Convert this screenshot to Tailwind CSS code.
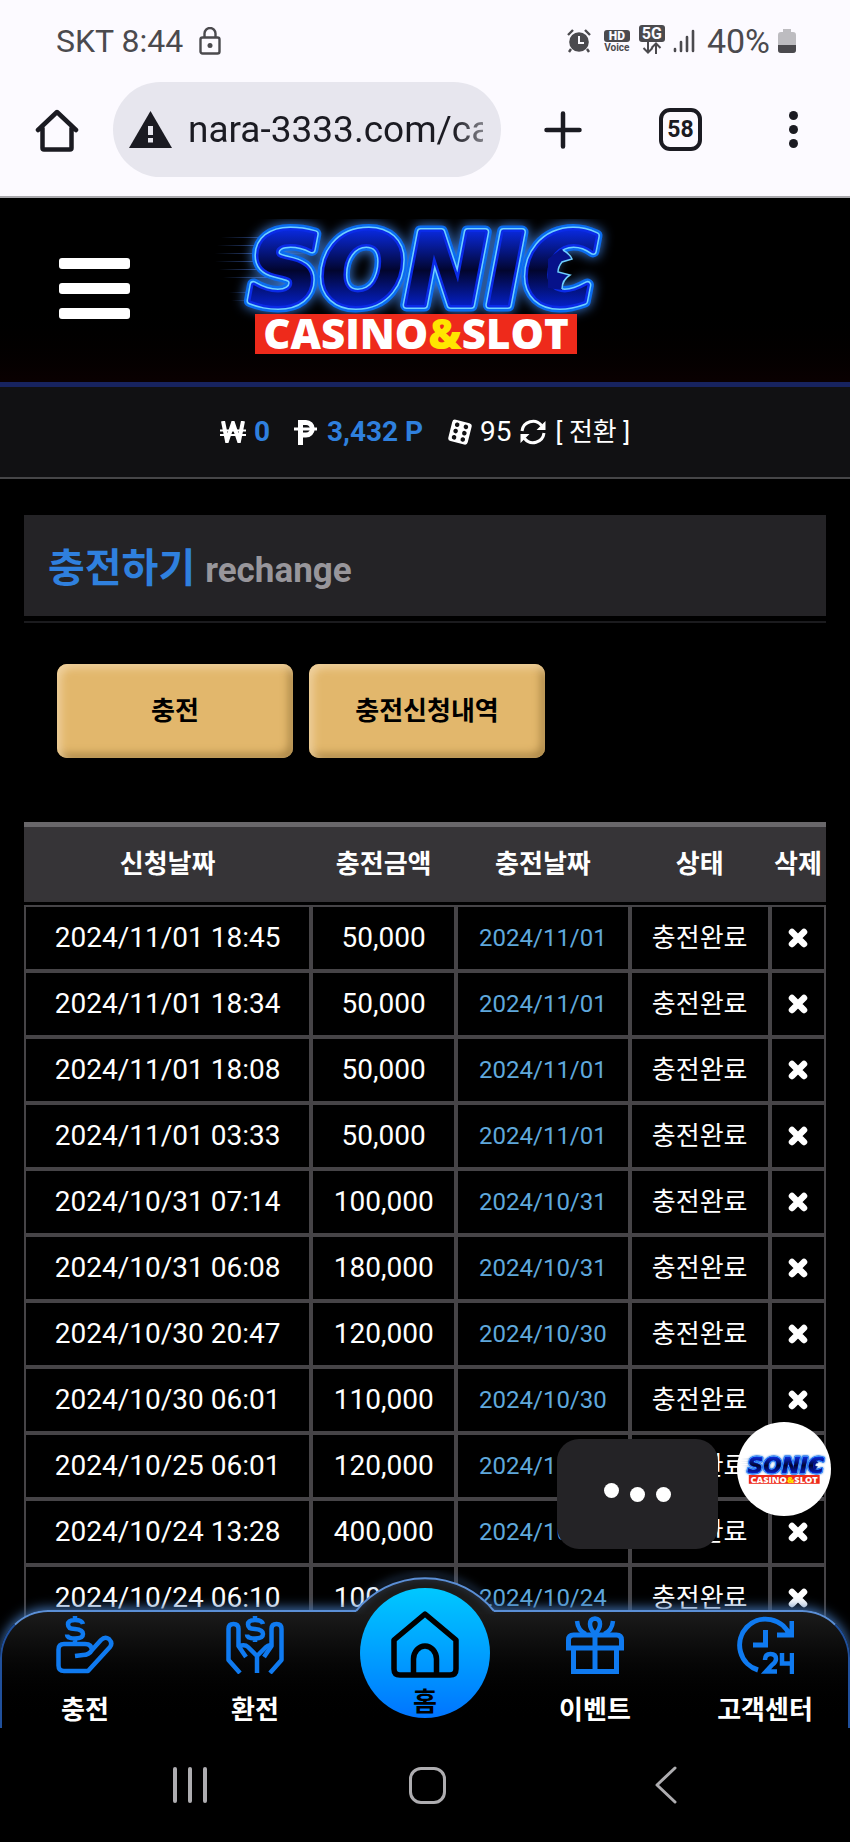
<!DOCTYPE html>
<html lang="ko">

<head>
    <meta charset="UTF-8">
    <meta name="viewport" content="width=device-width, initial-scale=1.0">
    <title>SONIC CASINO&amp;SLOT - 충전하기</title>
    <script src="https://cdn.jsdelivr.net/npm/@tailwindcss/browser@4"></script>
</head>

<body class="h-screen flex flex-col overflow-hidden bg-black text-white font-['Roboto','Noto_Sans_CJK_KR',sans-serif]">

    <!-- Shared drawings -->
    <svg class="absolute w-0 h-0" aria-hidden="true">
        <defs>
            <linearGradient id="letterFill" x1="0" y1="0" x2="0" y2="1">
                <stop offset=".1" stop-color="#0a2ef5" />
                <stop offset=".5" stop-color="#02052e" />
                <stop offset=".9" stop-color="#0527f0" />
            </linearGradient>
            <linearGradient id="speedLine" x1="0" y1="0" x2="1" y2="0">
                <stop offset="0" stop-color="#3b5fae" stop-opacity="0" />
                <stop offset=".6" stop-color="#3b5fae" />
                <stop offset="1" stop-color="#3b5fae" stop-opacity=".2" />
            </linearGradient>
            <symbol id="logo" viewBox="0 0 400 140">
                <g fill="url(#speedLine)">
                    <rect x="6" y="18" width="90" height="1" />
                    <rect x="2" y="26" width="90" height="1" />
                    <rect x="0" y="34" width="90" height="1" />
                    <rect x="0" y="42" width="90" height="1" />
                    <rect x="4" y="50" width="80" height="1" />
                    <rect x="8" y="58" width="80" height="1" />
                    <rect x="14" y="73" width="60" height="1" />
                    <rect x="16" y="81" width="60" height="1" />
                </g>
                <g font-family="DejaVu Sans, sans-serif" font-weight="700" font-style="italic" font-size="99" stroke-linejoin="round" class="drop-shadow-[0_0_6px_#3d7fe0]">
                    <text x="34" y="86" fill="#0a6cf0" stroke="#0a6cf0" stroke-width="13">SONIC</text>
                    <text x="34" y="86" fill="#6fd0ff" stroke="#6fd0ff" stroke-width="8">SONIC</text>
                    <text x="34" y="86" fill="#0a2be8" stroke="#0a2be8" stroke-width="5">SONIC</text>
                    <text x="34" y="86" fill="url(#letterFill)">SONIC</text>
                </g>
                <!-- Spikes inside the C -->
                <path d="M346 30q8 4 11 10l-10 3q-4 5-4 10l12 3q-8 5-8 15l-14-2V40z" fill="#06128a" />
                <path d="M348 31q7 4 9 9l-10 3q-4 5-4 10l12 3q-8 5-8 14" fill="none" stroke="#6fd0ff" stroke-width="1.500" />
                <rect x="40" y="95" width="322" height="40" fill="#ee2a1b" />
                <text x="201" y="130" text-anchor="middle" fill="#fff" font-family="Open Sans, sans-serif" font-weight="800" font-size="42">CASINO<tspan fill="#ffe600">&amp;</tspan>SLOT</text>
            </symbol>
        </defs>
    </svg>

    <!-- Phone status bar -->
    <div class="shrink-0 flex items-center justify-between h-[82px] pl-14 pr-[54px] bg-[#fcfaff] text-[#4b4a4e] text-[32px]">
        <div class="flex items-center gap-4">
            <span>SKT 8:44</span>
            <svg class="w-[22px] h-[28px]" viewBox="0 0 22 28" fill="none" stroke="currentColor" stroke-width="2.4">
                <rect x="1.5" y="10.500" width="19" height="16" rx="2" />
                <path d="M5.500 10V6.500a5.500 5.500 0 0 1 11 0V10" />
                <circle cx="11" cy="18.500" r="2.500" fill="currentColor" stroke="none" />
            </svg>
        </div>
        <div class="flex items-center">
            <svg class="w-[24px] h-[24px]" viewBox="0 0 24 24" fill="currentColor">
                <circle cx="12" cy="13" r="9.800" />
                <path d="M1 6 6 1M23 6l-5-5M4 20l-2 3M20 20l2 3" stroke="currentColor" stroke-width="2.400" fill="none" />
                <path d="M12 7v7h5" stroke="#fcfaff" stroke-width="2" fill="none" />
            </svg>
            <div class="flex flex-col items-center ml-3 w-[28px]">
                <span class="w-[26px] h-[12px] rounded-[3px] bg-[#4b4a4e] text-[#fcfaff] text-[12px] leading-[12px] font-black text-center">HD</span>
                <span class="text-[10px] leading-[11px] font-bold">Voice</span>
            </div>
            <div class="flex flex-col items-center ml-2 w-[26px] -mt-1">
                <span class="w-[26px] h-[17px] rounded-[3px] bg-[#4b4a4e] text-[#fcfaff] text-[16px] leading-[17px] font-bold text-center">5G</span>
                <svg class="w-[20px] h-[12px]" viewBox="0 0 20 12" fill="none" stroke="currentColor" stroke-width="2">
                    <path d="M6 0v10M1.500 6 6 10.500 10.500 6M14 12V2M9.500 6 14 1.500 18.500 6" />
                </svg>
            </div>
            <svg class="w-[22px] h-[24px] ml-2" viewBox="0 0 22 24" stroke="currentColor" stroke-width="2.600" stroke-linecap="round">
                <path d="M2 20v2M8 13v9M14 8v14M20 2v20" />
            </svg>
            <span class="ml-3 text-[34px]">40%</span>
            <svg class="w-[18px] h-[24px] ml-2" viewBox="0 0 18 24">
                <path d="M5 0h8v3h2a3 3 0 0 1 3 3v15a3 3 0 0 1-3 3H3a3 3 0 0 1-3-3V6a3 3 0 0 1 3-3h2z" fill="#bdbcc0" />
                <path d="M0 16h18v5a3 3 0 0 1-3 3H3a3 3 0 0 1-3-3z" fill="#4b4a4e" />
            </svg>
        </div>
    </div>

    <!-- Browser toolbar -->
    <div class="shrink-0 flex items-start h-[116px] pl-[35px] pr-[52px] bg-[#fcfaff] border-b-2 border-[#a9a8ac] text-[#1b1b22]">
        <button aria-label="홈" class="h-[95px] flex items-center">
            <svg class="w-[44px] h-[44px]" viewBox="0 0 44 44" fill="none" stroke="currentColor" stroke-width="4.500" stroke-linecap="round" stroke-linejoin="round">
                <path d="M3 22 22 4l19 18M7.500 20v20q0 1.500 1.500 1.500h26q1.500 0 1.500-1.500V20" />
            </svg>
        </button>
        <div class="flex items-center flex-1 min-w-0 h-[95px] ml-[34px] pl-4 pr-[18px] rounded-full bg-[#e7e6ee]">
            <svg class="shrink-0 w-[43px] h-[37px]" viewBox="0 0 43 37">
                <path d="M21.500 0 43 37H0z" fill="currentColor" />
                <path d="M21.500 15v9M21.500 27v4.500" stroke="#e7e6ee" stroke-width="5" />
            </svg>
            <input type="text" aria-label="주소" value="nara-3333.com/cash" class="flex-1 min-w-0 ml-4 bg-transparent outline-none text-[37px] mask-r-from-90% mask-r-to-110%">
        </div>
        <div class="shrink-0 flex items-center h-[95px] ml-[43px]">
            <button aria-label="새 탭">
                <svg class="w-[38px] h-[38px]" viewBox="0 0 38 38" stroke="currentColor" stroke-width="4.500" stroke-linecap="round">
                    <path d="M19 2.500v33M2.500 19h33" />
                </svg>
            </button>
            <button aria-label="탭 58개" class="w-[43px] h-[43px] ml-[77px] rounded-[11px] border-4 border-current text-[23px] leading-none font-bold">58</button>
            <button aria-label="메뉴" class="ml-[87px] flex flex-col gap-[5px]">
                <span class="size-[9px] rounded-full bg-current"></span>
                <span class="size-[9px] rounded-full bg-current"></span>
                <span class="size-[9px] rounded-full bg-current"></span>
            </button>
        </div>
    </div>

    <!-- Site header -->
    <header class="relative shrink-0 flex justify-center h-[189px] pt-[21px] bg-linear-to-b from-black via-black to-[#0a0001] border-b-5 border-[#17235f]">
        <button aria-label="메뉴 열기" class="absolute left-[59px] top-[60px] flex flex-col gap-[14px]">
            <span class="w-[71px] h-[11px] rounded-[3px] bg-white"></span>
            <span class="w-[71px] h-[11px] rounded-[3px] bg-white"></span>
            <span class="w-[71px] h-[11px] rounded-[3px] bg-white"></span>
        </button>
        <a href="#" aria-label="SONIC CASINO&amp;SLOT">
            <svg class="w-[400px] h-[140px] -ml-5 overflow-visible"><use href="#logo" /></svg>
        </a>
    </header>

    <!-- Balance -->
    <div class="shrink-0 flex items-center justify-center h-[92px] bg-[#111113] border-b-2 border-[#464648] text-[28px]">
        <svg class="w-[26px] h-[22px]" viewBox="0 0 26 22" fill="none" stroke="currentColor" stroke-width="4">
            <path d="M3 0l4 20 6-18 6 18L23 0" />
            <path d="M0 9.500h26M0 14h26" stroke-width="2" />
        </svg>
        <b class="ml-2 text-[#2f80de]">0</b>
        <svg class="w-[23px] h-[25px] ml-6" viewBox="0 0 23 25" fill="none" stroke="currentColor">
            <path d="M6.500 25V2.500H12a5.700 5.700 0 0 1 0 12.500H6.500" stroke-width="5" />
            <path d="M0 9h23" stroke-width="3" />
        </svg>
        <b class="ml-[10px] text-[#2f80de]">3,432 P</b>
        <svg class="w-[25px] h-[26px] ml-6" viewBox="0 0 25 26">
            <g transform="rotate(14 12.500 13)">
                <rect x="3" y="2" width="20" height="22" rx="3" fill="#fff" />
                <g fill="#111113">
                    <circle cx="8.500" cy="6.500" r="2.300" /><circle cx="17.500" cy="6.500" r="2.300" />
                    <circle cx="8.500" cy="13" r="2.300" /><circle cx="17.500" cy="13" r="2.300" />
                    <circle cx="8.500" cy="19.500" r="2.300" /><circle cx="17.500" cy="19.500" r="2.300" />
                </g>
            </g>
        </svg>
        <span class="ml-2">95</span>
        <svg class="w-[26px] h-[26px] ml-2" viewBox="0 0 26 26" fill="none" stroke="currentColor" stroke-width="3">
            <path d="M2 12A11 11 0 0 1 21.500 6.500M24 14A11 11 0 0 1 4.500 19.500" />
            <path d="M25.500 2v9h-9zM.500 24v-9h9z" fill="currentColor" stroke="none" />
        </svg>
        <button class="ml-[10px] text-[26px]">[ 전환 ]</button>
    </div>

    <!-- Page content -->
    <main class="flex-1 min-h-0 overflow-hidden px-6 pt-9">
        <h1 class="flex items-baseline h-[101px] px-6 pt-[26px] bg-[#242326] text-[40px] leading-[56px] font-bold text-[#2f80de]">
            충전하기<small class="ml-[10px] text-[35px] text-[#98969b]">rechange</small>
        </h1>
        <div class="mt-[5px] h-[2px] bg-[#1b1b1e]"></div>

        <div class="flex gap-4 mt-[41px] pl-[33px]">
            <button class="w-[236px] h-[94px] rounded-[10px] bg-[#e2b76c] text-black text-[26px] font-bold shadow-[inset_4px_4px_8px_#f0d2a0,inset_-4px_-4px_8px_#a88444]">충전</button>
            <button class="w-[236px] h-[94px] rounded-[10px] bg-[#e2b76c] text-black text-[26px] font-bold shadow-[inset_4px_4px_8px_#f0d2a0,inset_-4px_-4px_8px_#a88444]">충전신청내역</button>
        </div>

        <table class="mt-16 w-full table-fixed border-separate border-spacing-0 text-center">
            <colgroup>
                <col class="w-[35.8%]">
                <col class="w-[18.1%]">
                <col class="w-[21.6%]">
                <col class="w-[17.5%]">
                <col class="w-[7%]">
            </colgroup>
            <thead>
                <tr class="h-[83px] text-[26px]">
                    <th class="bg-[#363437] bg-clip-padding border-t-5 border-t-[#69676a] border-b-3 border-b-black">신청날짜</th>
                    <th class="bg-[#363437] bg-clip-padding border-t-5 border-t-[#69676a] border-b-3 border-b-black">충전금액</th>
                    <th class="bg-[#363437] bg-clip-padding border-t-5 border-t-[#69676a] border-b-3 border-b-black">충전날짜</th>
                    <th class="bg-[#363437] bg-clip-padding border-t-5 border-t-[#69676a] border-b-3 border-b-black">상태</th>
                    <th class="bg-[#363437] bg-clip-padding border-t-5 border-t-[#69676a] border-b-3 border-b-black whitespace-nowrap">삭제</th>
                </tr>
            </thead>
            <tbody id="rows"></tbody>
        </table>
    </main>

    <!-- Chat bubble and logo badge -->
    <div class="absolute right-[132px] bottom-[293px] flex items-center justify-center gap-[11px] w-[161px] h-[110px] rounded-[22px] bg-[#242326]">
        <span class="size-[15px] -mt-2 rounded-full bg-white"></span>
        <span class="size-[15px] rounded-full bg-white"></span>
        <span class="size-[15px] rounded-full bg-white"></span>
    </div>
    <button aria-label="상담" class="absolute right-[19px] bottom-[326px] flex items-center justify-center size-[94px] rounded-full bg-white">
        <svg class="w-[88px] h-[31px]"><use href="#logo" /></svg>
    </button>

    <!-- Bottom menu -->
    <nav class="relative shrink-0 h-[118px] -mt-[118px] rounded-t-[48px] border-2 border-b-0 border-[#5b8fd6] border-x-[#20509c] bg-linear-to-b from-[#1b1b1b] to-black shadow-[0_-2px_12px_#3f6fae] text-[26px] font-bold [clip-path:inset(-40px_0_0_0)]">
        <svg class="absolute left-1/2 -translate-x-1/2 -top-[44px] w-[200px] h-[60px]" viewBox="0 0 200 60">
            <path d="M31 43A89 89 0 0 1 169 43V46H31z" fill="#1b1b1b" />
            <path d="M31 43A89 89 0 0 1 169 43" fill="none" stroke="#5b8fd6" stroke-width="2" class="drop-shadow-[0_-3px_4px_#4f80c4]" />
        </svg>
        <div class="relative grid grid-cols-5 h-full -mx-[2px] text-center leading-8">
            <a href="#" class="flex flex-col items-center pt-1">
                <svg class="w-[58px] h-[58px]" viewBox="0 0 58 58" fill="none" stroke="#0f7af0" stroke-width="4.500" stroke-linejoin="round">
                    <path d="M36 35q0-7-7-7H8q-5.500 0-5.500 5.500v16q0 5.500 5.500 5.500h24L54 31q3-4-1-8-4-3-8 1L36 34q-3 5-9 5l-8 1" />
                    <path d="M27 8q-1-4-8-4-7 0-7 4.500t7 4.500q8 .500 8 5t-8 4.500q-8 0-8-4M19 0v4M19 22v6" />
                </svg>
                <span class="mt-5">충전</span>
            </a>
            <a href="#" class="flex flex-col items-center pt-1">
                <svg class="w-[58px] h-[58px]" viewBox="0 0 58 58" fill="none" stroke="#0f7af0" stroke-width="4.500" stroke-linejoin="round">
                    <path d="M14 57 2.500 44V13q0-5 5-5t5 5v17l7.500 11M44 57l11.500-13V13q0-5-5-5t-5 5v17L38 41" />
                    <path d="M31 57V40L22 31q-3-3-9-1M31 40l9-9q3-3 6-1" />
                    <path d="M37 8q-1-4-8-4-7 0-7 4.500t7 4.500q8 .500 8 5t-8 4.500q-8 0-8-4M29 0v4M29 22v4" />
                </svg>
                <span class="mt-5">환전</span>
            </a>
            <a href="#" class="flex flex-col items-center justify-self-center w-[130px] h-[130px] -mt-6 pt-[22px] rounded-full bg-linear-to-b from-[#00c8ff] to-[#0074ff] text-black">
                <svg class="w-[68px] h-[68px]" viewBox="0 0 68 68" fill="none" stroke="currentColor" stroke-width="5.500" stroke-linejoin="round">
                    <path d="M34 4 65 30v29q0 6-6 6H9q-6 0-6-6V30z" />
                    <path d="M22.500 65V49a11.500 13 0 0 1 23 0v16" />
                </svg>
                <span class="mt-2">홈</span>
            </a>
            <a href="#" class="flex flex-col items-center pt-1">
                <svg class="w-[58px] h-[58px]" viewBox="0 0 58 58" fill="none" stroke="#0f7af0" stroke-width="5">
                    <path d="M2.500 32v-8q0-5 5-5h43q5 0 5 5v8zM7.500 32v23.500h43V32M29 18v37" />
                    <path d="M29 18q-5-5-5-10 0-5 5-5.500 5 .500 5 5.500 0 5-5 10zM11 5q1 10 9 13M47 5q-1 10-9 13" stroke-width="4.500" />
                </svg>
                <span class="mt-5">이벤트</span>
            </a>
            <a href="#" class="flex flex-col items-center pt-1">
                <svg class="w-[58px] h-[58px]" viewBox="0 0 58 58" fill="none" stroke="#0f7af0" stroke-width="5">
                    <path d="M22 54A26 26 0 1 1 54 20M29.500 14v15H17M56 5v14H41" />
                    <path d="M29 44q0-6 5.500-6t5.500 5q0 3-4 6l-6 6.500h11M46 37v10.500h10M56 37v21" stroke-width="4.500" />
                </svg>
                <span class="mt-5 whitespace-nowrap">고객센터</span>
            </a>
        </div>
    </nav>

    <!-- Phone navigation -->
    <div class="relative shrink-0 flex items-center justify-between h-[114px] px-[173px] bg-black text-[#aeadb0]">
        <button aria-label="최근 앱" class="flex gap-[11px]">
            <span class="w-1 h-[36px] rounded-full bg-current"></span>
            <span class="w-1 h-[36px] rounded-full bg-current"></span>
            <span class="w-1 h-[36px] rounded-full bg-current"></span>
        </button>
        <button aria-label="홈 화면" class="size-[37px] mr-2 rounded-[12px] border-3 border-current"></button>
        <button aria-label="뒤로">
            <svg class="w-[22px] h-[38px]" viewBox="0 0 22 38" fill="none" stroke="currentColor" stroke-width="3" stroke-linecap="round" stroke-linejoin="round">
                <path d="M20 2 2 19l18 17" />
            </svg>
        </button>
    </div>

    <script>
        const rows = [
            ['2024/11/01 18:45', '50,000', '2024/11/01'],
            ['2024/11/01 18:34', '50,000', '2024/11/01'],
            ['2024/11/01 18:08', '50,000', '2024/11/01'],
            ['2024/11/01 03:33', '50,000', '2024/11/01'],
            ['2024/10/31 07:14', '100,000', '2024/10/31'],
            ['2024/10/31 06:08', '180,000', '2024/10/31'],
            ['2024/10/30 20:47', '120,000', '2024/10/30'],
            ['2024/10/30 06:01', '110,000', '2024/10/30'],
            ['2024/10/25 06:01', '120,000', '2024/10/25'],
            ['2024/10/24 13:28', '400,000', '2024/10/24'],
            ['2024/10/24 06:10', '100,000', '2024/10/24'],
        ];

        document.getElementById('rows').innerHTML = rows.map(([requested, amount, charged]) => `
            <tr class="h-[66px] text-[28px] leading-8 whitespace-nowrap">
                <td class="border-2 border-[#464447]">${requested}</td>
                <td class="border-2 border-[#464447]">${amount}</td>
                <td class="border-2 border-[#464447] text-[24px] text-[#5fa8dc]">${charged}</td>
                <td class="border-2 border-[#464447] text-[26px]">충전완료</td>
                <td class="border-2 border-[#464447]">
                    <button aria-label="삭제" class="block mx-auto">
                        <svg class="w-[20px] h-[20px]" viewBox="0 0 20 20" stroke="#fff" stroke-width="6.500" stroke-linecap="round"><path d="M4 4l12 12M16 4 4 16" /></svg>
                    </button>
                </td>
            </tr>`).join('');
    </script>
</body>

</html>
